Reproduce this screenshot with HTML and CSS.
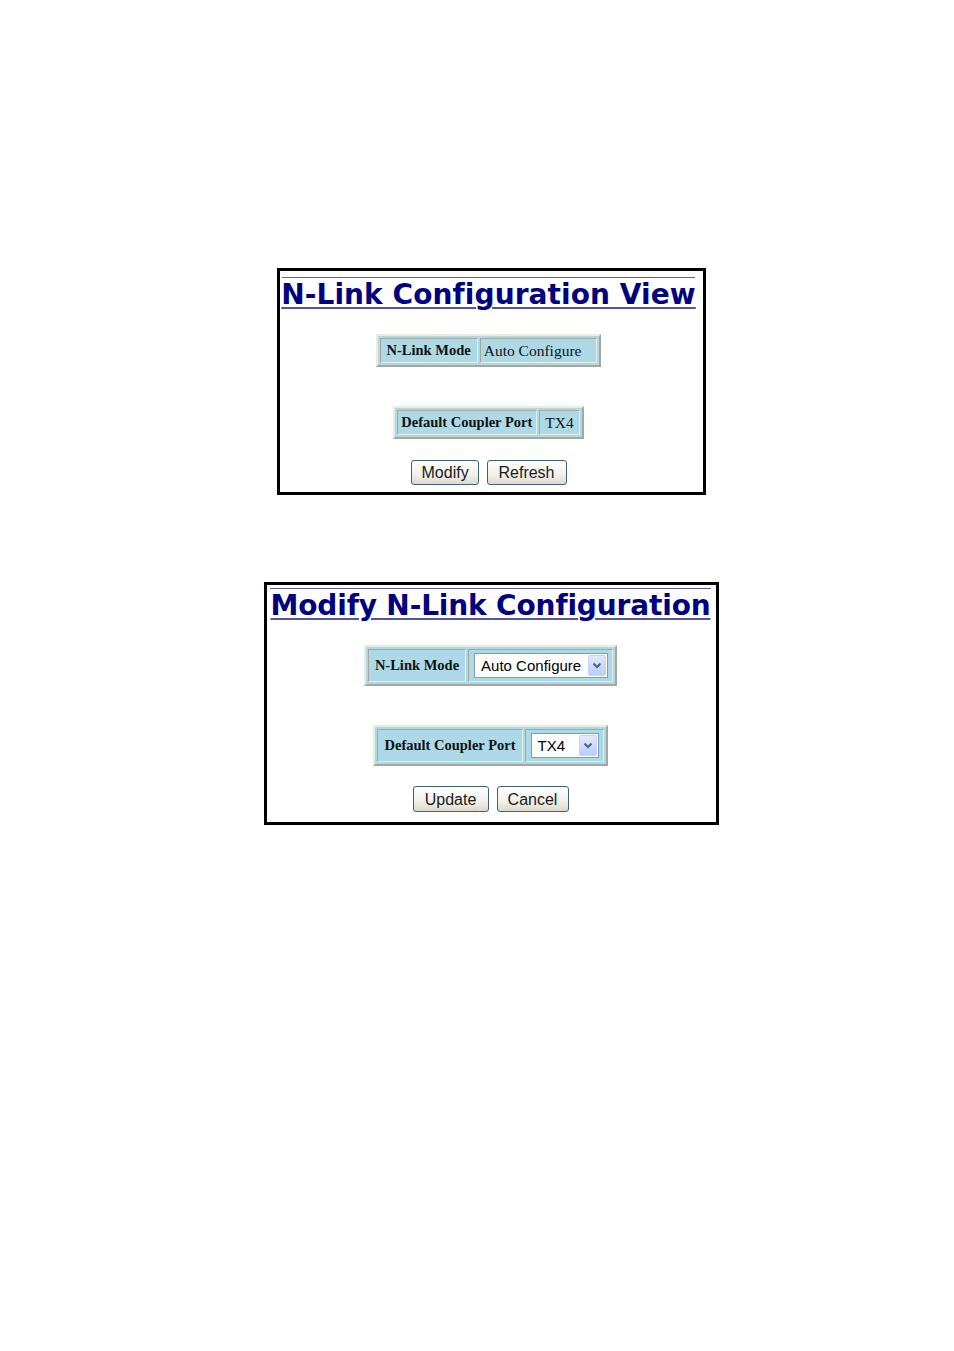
FILE: index.html
```html
<!DOCTYPE html>
<html lang="en">
<head>
<meta charset="utf-8">
<title>N-Link Configuration</title>
<link rel="stylesheet" href="styles.css">
</head>
<body>
<div class="page">
  <section class="frame frame-view">
    <div class="rule"></div>
    <h1 class="title">N-Link Configuration View</h1>
    <table class="kv kv-first">
      <tr><th>N-Link Mode</th><td class="wide">Auto Configure</td></tr>
    </table>
    <table class="kv kv-second">
      <tr><th class="tight">Default Coupler Port</th><td>TX4</td></tr>
    </table>
    <div class="buttons">
      <button class="btn btn-modify">Modify</button>
      <button class="btn btn-refresh">Refresh</button>
    </div>
  </section>

  <section class="frame frame-modify">
    <div class="rule"></div>
    <h1 class="title title-modify">Modify N-Link Configuration</h1>
    <table class="kv kv-first">
      <tr><th>N-Link Mode</th><td class="field"><span class="sel sel-mode"><span class="sel-text">Auto Configure</span><span class="sel-arrow"><svg width="10" height="7" viewBox="0 0 10 7"><path d="M1.5 1.5 L5 5 L8.5 1.5" fill="none" stroke="#4d6185" stroke-width="2"/></svg></span></span></td></tr>
    </table>
    <table class="kv kv-second">
      <tr><th>Default Coupler Port</th><td class="field"><span class="sel sel-port"><span class="sel-text">TX4</span><span class="sel-arrow"><svg width="10" height="7" viewBox="0 0 10 7"><path d="M1.5 1.5 L5 5 L8.5 1.5" fill="none" stroke="#4d6185" stroke-width="2"/></svg></span></span></td></tr>
    </table>
    <div class="buttons">
      <button class="btn btn-update">Update</button>
      <button class="btn btn-cancel">Cancel</button>
    </div>
  </section>
</div>
</body>
</html>
```

FILE: styles.css
```css
html, body {
  margin: 0;
  padding: 0;
  background: #ffffff;
}

.page {
  box-sizing: border-box;
  width: 954px;
  min-height: 1351px;
  padding: 268px 0 0 29px;
  display: flex;
  flex-direction: column;
  align-items: center;
  gap: 87px;
}

.frame {
  border: 3px solid #000;
  display: flex;
  flex-direction: column;
  align-items: center;
}

.frame-view {
  width: 413px;
  padding: 6px 8px 7px 2px;
}

.frame-modify {
  width: 441px;
  padding: 3px 5px 10px 3px;
}

.rule {
  align-self: stretch;
  height: 1px;
  background: #5f5fb0;
}

.title {
  margin: 0;
  font-family: "DejaVu Sans", Verdana, sans-serif;
  font-weight: bold;
  font-size: 28px;
  line-height: 34px;
  color: #000080;
  text-decoration: underline;
  text-decoration-color: #5555a8;
  text-decoration-thickness: 2px;
  text-underline-offset: 3px;
  white-space: nowrap;
  letter-spacing: 0.08px;
}

.title-modify {
  letter-spacing: -0.15px;
}

.kv {
  border-collapse: separate;
  border-spacing: 2px;
  border: 2px solid;
  border-color: #ecebe2 #a9a79a #a9a79a #ecebe2;
  background: #add8e6;
  font-family: "Liberation Serif", "Times New Roman", serif;
  font-size: 15.5px;
  color: #111;
}

.kv th,
.kv td {
  border: 1px solid;
  border-color: #a9a79a #ecebe2 #ecebe2 #a9a79a;
  padding: 3px 5px;
  line-height: 17px;
  white-space: nowrap;
}

.kv th {
  font-weight: bold;
  font-size: 14.5px;
  padding-left: 6px;
  padding-right: 6px;
}

.kv th.tight {
  padding-left: 3px;
  padding-right: 4px;
}

.kv td {
  font-weight: normal;
}

.kv td.wide {
  padding-left: 3px;
  padding-right: 15px;
}

.kv td.field {
  padding: 3px 4px 3px 5px;
}

.frame-view .kv-first { margin-top: 22px; }
.frame-view .kv-second { margin-top: 39px; }
.frame-view .buttons { margin-top: 21px; }

.frame-modify .kv-first { margin-top: 22px; }
.frame-modify .kv-second { margin-top: 39px; }
.frame-modify .buttons { margin-top: 20px; }

.sel {
  box-sizing: border-box;
  display: flex;
  align-items: center;
  height: 25px;
  border: 1px solid #7f9db9;
  background: #fff;
  padding: 1px;
  font-family: "Liberation Sans", Arial, sans-serif;
  font-size: 15px;
  color: #000;
}

.sel-mode { width: 134px; }
.sel-port { width: 68px; }

.sel-text {
  flex: 1;
  padding-left: 5px;
  line-height: 21px;
}

.sel-arrow {
  box-sizing: border-box;
  width: 18px;
  height: 21px;
  display: flex;
  align-items: center;
  justify-content: center;
  border: 1px solid #c6d5f7;
  border-radius: 2px;
  background: linear-gradient(#e2eafc, #b9cdf6);
}

.buttons {
  display: flex;
  gap: 8px;
  justify-content: center;
}

.btn {
  box-sizing: border-box;
  height: 25px;
  padding: 0 10px;
  border: 1px solid #3f5f86;
  border-radius: 3px;
  background: linear-gradient(#ffffff, #f1f0ea 60%, #dcd8cc);
  font-family: "Liberation Sans", Arial, sans-serif;
  font-size: 16px;
  line-height: 21px;
  color: #1a1a1a;
}

.frame-modify .btn {
  height: 26px;
}

.btn-modify { width: 68px; }
.btn-refresh { width: 80px; }
.btn-update { width: 76px; }
.btn-cancel { width: 72px; }
```
